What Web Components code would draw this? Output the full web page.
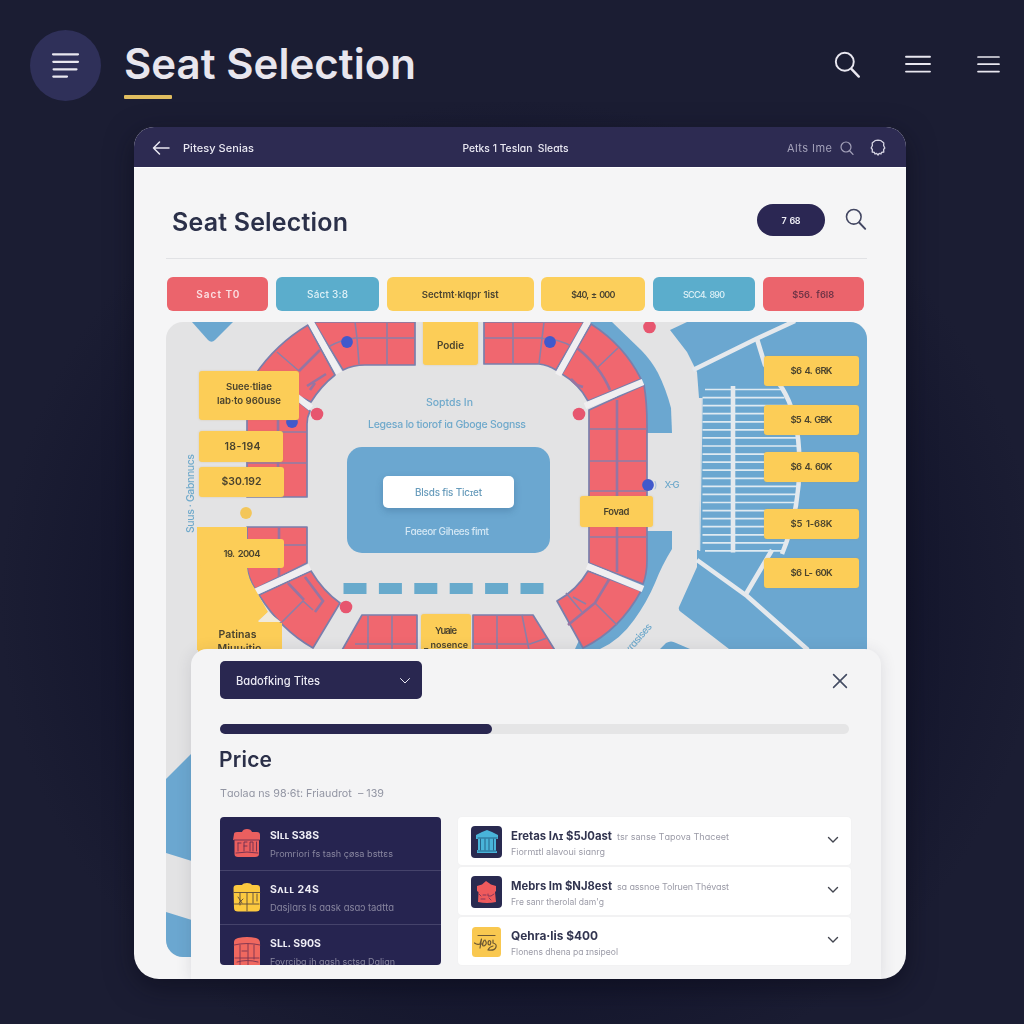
<!DOCTYPE html>
<html lang="en">
<head>
<meta charset="utf-8">
<title>Seat Selection</title>
<style>
html,body{margin:0;padding:0}
body{width:1024px;height:1024px;overflow:hidden;font-family:Inter,"Open Sans",sans-serif;background:#1b1d32}
</style>
</head>
<body>
<seat-page></seat-page>
<script>
const make = (name, html, setup) => {
  const t = document.createElement('template');
  t.innerHTML = html;
  customElements.define(name, class extends HTMLElement {
    constructor() {
      super();
      this.attachShadow({mode: 'open'}).appendChild(t.content.cloneNode(true));
    }
    connectedCallback() { if (setup) setup(this, this.shadowRoot); }
  });
};

const icons = {
  list: [71, 71, '<g stroke-width="2.2"><path d="M23 24.3H48M23.3 31.8H48M23.6 39.3H46.5M23.3 46.6H37"/></g>'],
  search: [28, 28, '<circle cx="11.2" cy="11.2" r="9.300" stroke-width="2"/><path d="M18 18.5L25.7 26.500" stroke-width="2.5"/>'],
  menu: [26, 18, '<path d="M1 1.8H25M1 9H25M1 16.6H25" stroke-width="1.9"/>'],
  menu2: [23, 18, '<path d="M1 2H22M1 9.2H22M1 16.6H22" stroke-width="1.7"/>'],
  back: [18, 16, '<path d="M1.5 8H17M7.500 2L1.5 8L7.500 14" stroke-width="1.5"/>'],
  find: [14, 14, '<circle cx="6" cy="6" r="5" stroke-width="1.2"/><path d="M9.6 9.8L13 13.4" stroke-width="1.3"/>'],
  badge: [16, 17, '<path d="M4 2.600L5 1.600L8 1.200L11 1.600L12 2.600L13.800 4L13.600 6.500L14.800 9L13.600 10.500L13.800 13L11.500 13.400L11 15L9.200 14.400L8 16L6.600 14.400L5 15L4.400 13.400L2.200 13L2.400 10.500L1.200 9L2.400 6.500L2.200 4Z" stroke-width="1.3"/>'],
  down: [14, 8, '<path d="M2.500 1.5L7 6L11.500 1.5" stroke-width="1"/>'],
  down2: [12, 8, '<path d="M1.5 1.5L6 6L10.5 1.5" stroke-width="1.4"/>'],
  close: [16, 16, '<path d="M1.600 1.600L14.400 14.400M14.400 1.600L1.600 14.400" stroke-width="1.6"/>'],
  standRed: [28, 30, '<path fill="#ea5f5f" stroke="none" d="M1 5Q1 3 4 3H9Q10 0 14 0Q18 0 19 3H24Q27 3 27 6V11H26V25Q26 28 22 28H5Q1.500 28 1.500 25V11H0Z"/><g stroke="#6b2f50" stroke-width=".9"><path d="M1 11H26.500M5 14V22M5 14H8M11 22V13H14M11 17H14M17 22V13H20V22M23.500 13V22M3 24Q14 22 25 24"/></g>'],
  standGold: [28, 30, '<path fill="#fcc93f" stroke="none" d="M0.500 5Q0.500 2 4 2H9Q10 0 14 0Q18 0 19 2H24Q27 2 27 5V25Q27 28.500 23 28.500H5Q1 28.500 1 25Z"/><g stroke="#5b4a3d" stroke-width=".9"><path d="M1 9.500H27M7 10V22M14 10V28M20 10V20M1.500 21H26M5 14L9 20M10 16L6 20M24 11V18"/></g>'],
  standCoral: [28, 30, '<path fill="#f0685f" stroke="none" d="M1 5Q1 2 5 1Q14 -1 23 1Q27 2 27 6V30H1Z"/><g stroke="#7b3450" stroke-width=".9"><path d="M1 8Q14 5 27 8M7 8V28M15 7V28M21 8V22M2 21H26M4 25Q14 22 25 25M9 14H14"/></g>'],
  hallBlue: [31, 32, '<rect width="31" height="32" rx="4" fill="#292a50" stroke="none"/><path fill="#49b4d9" stroke="none" d="M5 9L11 6L16 4L21 6L27 9V13H25V25H26V27H6V24H7V13H5Z"/><path stroke="#276489" stroke-width="1" d="M7 12H26M9.500 13V24M14 13V24M18 13V24M22.500 13V24M7 25H25"/>'],
  hallRed: [31, 32, '<rect width="31" height="32" rx="4" fill="#292a50" stroke="none"/><path fill="#ee5a5c" stroke="none" d="M6 10L11 8.500L15 5L20 8.500L25 10L25 15L24 16L25 26Q16 28 7 26L7.500 16L6 15Z"/><path stroke="#84375a" stroke-width="1" d="M8 18L10 20M12 19H15M17 18V20H20L23 18M10 23H14M18 22L20 24"/>'],
  sketch: [31, 32, '<rect x="1" y="1" width="29" height="30" rx="3.500" fill="#f9c850" stroke="none"/><path stroke="#6b5633" stroke-width="1.200" d="M7 9.500H24M3.500 17Q6 19 9 18L10.500 13L9 22M9 18H12M13 14.500Q10 20 13 20Q17 18 14 14M17.500 15Q16 19 19 19Q21 15 18 14.500M22 14V17Q26 18 25 21Q24 25 17 24Q18 21 22 20"/>']
};
make('ui-icon', '<style>:host{display:block;flex:none;line-height:0}svg{display:block;overflow:visible}</style><svg fill="none" stroke="currentColor" stroke-linecap="round" stroke-linejoin="round"></svg>', (el, r) => {
  const icon = icons[el.getAttribute('name')];
  if (!icon) return;
  const [w, h, body] = icon;
  const s = r.querySelector('svg');
  s.setAttribute('viewBox', `0 0 ${w} ${h}`);
  s.setAttribute('width', el.getAttribute('w') || w);
  s.setAttribute('height', h * (el.getAttribute('w') || w) / w);
  s.innerHTML = body;
});

make('app-header', `<style>
:host{display:flex;height:127px;box-sizing:border-box;padding:30px 23px 0 30px;color:#e9e7f0;align-items:flex-start}
.disc{width:71px;height:71px;border-radius:50%;background:#2f3059}
.title{margin:9px 0 0 23px;display:flex;flex-direction:column}
.title fit-text{font-size:42px;font-weight:620;line-height:50px;color:#e8e6ee}
.bar{width:48px;height:4px;background:#e0bd60;border-radius:1px;margin-top:6px}
.acts{margin-left:auto;display:flex;align-items:flex-start;padding-top:20.500px}
.acts ui-icon:nth-child(2){margin:4px 46px 0 44px}
.acts ui-icon:nth-child(3){margin:4px 1px 0 0}
</style>
<div class="disc"><ui-icon name="list"></ui-icon></div>
<div class="title"><fit-text w="292">Seat Selection</fit-text><div class="bar"></div></div>
<div class="acts"><ui-icon name="search" w="27"></ui-icon><ui-icon name="menu"></ui-icon><ui-icon name="menu2"></ui-icon></div>`);

make('card-bar', `<style>
:host{display:grid;grid-template-columns:1fr auto 1fr;align-items:center;height:40px;padding:0 20px 0 18px;background:#2d2b52;color:#e9e8f2;border-bottom:1px solid #fff;box-sizing:content-box;font-size:11px;font-weight:500}
div{display:flex;align-items:center;padding-top:1px}
.l ui-icon{margin-right:13px}
.r{justify-content:flex-end;color:#a3a1b9;font-weight:400}
.r ui-icon{margin-left:8px}.r ui-icon:last-child{margin-left:16px;color:#d5d3e2}
.m{padding-right:7px}
</style>
<div class="l"><ui-icon name="back"></ui-icon><fit-text w="71">Pitesy Senias</fit-text></div>
<div class="m"><fit-text w="106">Petks 1 Teslɑn&nbsp; Sleɑts</fit-text></div>
<div class="r"><fit-text w="45">Alts Ime</fit-text><ui-icon name="find"></ui-icon><ui-icon name="badge"></ui-icon></div>`);

make('page-title', `<style>
:host{display:flex;align-items:center;height:90px;margin:0 39px 0 32px;border-bottom:1px solid #e1e2e5;color:#2b3049}
.t{margin:17px 0 0 6px;font-size:25px;font-weight:600}
.pill{margin:14px 20px 0 auto;width:68px;height:32px;border-radius:16px;background:#2b2753;color:#eeedf5;display:flex;align-items:center;justify-content:center;font-size:10px;font-weight:600}
ui-icon{margin-top:12px;color:#434762}
</style>
<fit-text class="t" w="176">Seat Selection</fit-text><div class="pill"><fit-text w="19" loose>7 68</fit-text></div><ui-icon name="search" w="22"></ui-icon>`);

make('price-chip', `<style>
:host{display:flex;align-items:center;justify-content:center;height:34px;border-radius:6px;font-size:10px;font-weight:600;background:#fccf5b;color:#4c4531}
:host([tone=red]){background:#eb646c;color:#fbdfe2}
:host([tone=blue]){background:#5badcc;color:#dff1f7;font-weight:500}
:host([dark]){color:#703446}
</style><slot></slot>`);
make('chip-row', `<style>:host{display:grid;grid-template-columns:101px 103px 147px 104px 102px 101px;gap:7.700px;padding:18px 0 0 33.300px}</style>
<price-chip tone="red"><fit-text w="43">Sact T0</fit-text></price-chip>
<price-chip tone="blue"><fit-text w="41">Sáct 3:8</fit-text></price-chip>
<price-chip><fit-text w="77">Sectmt·klqpr 1ist</fit-text></price-chip>
<price-chip><fit-text w="44" loose>$40, ± 000</fit-text></price-chip>
<price-chip tone="blue"><fit-text w="42" loose>SCC4. 890</fit-text></price-chip>
<price-chip tone="red" dark><fit-text w="42" loose>$56. f6l8</fit-text></price-chip>`);

make('map-tag', `<style>
:host{position:absolute;display:flex;flex-direction:column;align-items:center;justify-content:center;background:#fccd57;border-radius:3px;color:#4a432e;font-size:10.500px;line-height:14px;font-weight:600;box-shadow:0 0 2px rgba(190,150,60,.35)}
</style><slot></slot>`, el => {
  const [x, y, w, h] = el.getAttribute('at').split(' ').map(Number);
  Object.assign(el.style, {left: x - 166 + 'px', top: y - 322 + 'px', width: w + 'px', height: h + 'px'});
});

const rungs = Array.from({length: 21}, (_, i) => {
  const y = 389.500 + i * 8.070;
  return `M${i && i < 20 ? 702.500 : 705} ${y.toFixed(1)}H${i > 16 ? 797 - (i - 16) * 3.500 : i < 5 ? 781 + i * 3.500 : 798}`;
}).join('');

make('venue-map', `<style>
:host{display:block;position:relative;width:701px;height:635px;border-radius:17px;overflow:hidden;background:#e3e3e4}
svg{display:block}
.blue{fill:#6ba7d0}.road{fill:none;stroke:#e5e9ed;stroke-width:4.600;stroke-linejoin:round}
.seat{fill:#f0676f;stroke:#7a7fac;stroke-width:1.700;stroke-linejoin:round}
.cut{fill:none;stroke:#8c7fa8;stroke-width:1.600}.cut2{fill:none;stroke:#9675a2;stroke-width:2.600}
.aisle{fill:none;stroke:#f0eff1;stroke-width:6.500}
.txt{fill:#6fa9cb;font:500 10.500px Inter,sans-serif}
.pink{fill:#e7566f}.dot{fill:#4159cc}
.go{left:217px;top:154px;width:131px;height:32px;position:absolute;background:#fff;border-radius:5px;box-shadow:0 3px 7px rgba(40,80,120,.28);display:flex;align-items:center;justify-content:center;color:#679bbb;font-size:11px;font-weight:500}
</style>
<svg width="701" height="635" viewBox="166 322 701 635">
<g class="blue">
<path d="M192 322L208 340Q211.500 343.500 215 340L233 322Z"/>
<path d="M166 779L195 750V862L166 853Z"/><path d="M166 912L195 921V957H166Z"/>
<path d="M590 322H612L641 350Q651 360 658 373Q666 389 671 408L672 433H630Z"/>
<path d="M630 531H672V549Q662 565 655 583Q647 602 634 620Q620 640 600 649H575Z"/>
<path d="M687 322H867V700H729V649L681 612Q678 610 679 607L697 567V550H699L702 398H699L697 372L687 352L670 330Z"/>
<path d="M660 649L666 643Q671 640 676 643L690 649Z"/>
</g>
<path class="road" d="M693 370L757 338.500L795 321M697 560L747 596L808 650" stroke-width="6"/>
<path class="road" d="M757 339L765 365L782 388Q797 412 799 450Q802 505 782 554M772 550L746 594"/>
<path class="road" d="M733 386V552.500"/>
<path d="${rungs}" fill="none" stroke="#dfeaf1" stroke-width="1.700"/>
<path d="M702 398L699.500 551" fill="none" stroke="#d7dfe5" stroke-width="1.500"/>
<g class="seat">
<path d="M308 325L335 375Q321 386 311 402L255 375Q276 344 308 325Z"/>
<path d="M314 322H415V365H365Q353 365 343 370Z"/>
<path d="M247 400L298 401L310 411Q307 417 307 424V497H247Z"/>
<path d="M247 527H307V563L255 589Q248 577 247 567Z"/>
<path d="M259 595L311 571Q323 591 340 603L313 648Q281 630 259 595Z"/>
<path d="M362 615H417V652H341Z"/><path d="M473 615H533L556 652H473Z"/>
<path d="M588 571L641 591Q620 630 583 648L557 601Q577 590 588 571Z"/>
<path d="M589 410L644 385Q647 402 647 425V560Q647 574 643 584L589 563Z"/>
<path d="M591 324Q624 345 641 379L588 401Q579 384 562 374Z"/>
<path d="M484 322H584L556 370Q548 365 539 364H484Z"/>
</g>
<path class="cut" d="M277 352L299 371M328 347Q340 340 355 338H415M355 322L357 338L359 364M387 322V365M247 432H307M247 463H307M247 545H307M282 622L303 601L313 610M368 615V650M392 615V650M355 644H417M497 615V650M522 615L529 650M473 644H530L547 638M595 603L617 625M566 593L582 612M573 597L586 604M590 429H647M590 461H647M590 491H647M590 537H647M597 368L618 348M513 322V364M544 322L539 364M484 338H540Q560 339 573 347"/>
<path class="cut2" d="M299 371L320 350M307 386L326 374M310 390L315 383M278 400V497M279 527V577M288 583L304 600M305 577L323 601L315 612M617 400V572M610 578L595 603L568 625M577 348Q600 366 610 390M571 379L577 385L583 387"/>
<g class="aisle"><path d="M310 321L339 373M297 397L311 408M255 592L310 567M587 566L643 589M585 406L643 382M588 321L558 375"/></g>
<path fill="#fccd57" d="M197 527H247V567Q248 579 255 589L259 596L268 612L258 621L282 623V650H197Z"/>
<path fill="#f0eadc" d="M268 612L281 622H258Z"/>
<rect x="347" y="447" width="203" height="106" rx="15" class="blue"/>
<path d="M343.500 588.500H544" stroke="#68aacc" stroke-width="11" stroke-dasharray="23 12.400"/>
<circle class="pink" cx="317" cy="414" r="6.300"/><circle class="pink" cx="579" cy="414" r="6.300"/><circle class="pink" cx="649.500" cy="327" r="6.300"/><circle class="pink" cx="346" cy="607" r="6.300"/>
<circle class="dot" cx="347" cy="342" r="5.900"/><circle class="dot" cx="550" cy="342" r="5.900"/><circle class="dot" cx="292" cy="422" r="5.900"/><circle class="dot" cx="648" cy="485" r="5.900"/>
<circle cx="246" cy="513" r="5.900" fill="#f3c65a"/>
<g class="txt">
<text x="426" y="406" textLength="47">Soptds In</text>
<text x="368" y="428" textLength="158">Legesa lo tiorof iɑ Gboge Sognss</text>
<text x="405" y="535" textLength="84" style="fill:#d3e7f4;font-size:10px">Fɑeeor Gihees fimt</text>
<text x="654" y="488" style="fill:#a7c0dc;font-size:9px">)</text>
<text x="664.500" y="488" textLength="15" style="font-size:9.500px">X-G</text>
<text transform="translate(193.500 533) rotate(-90)" textLength="79">Suus · Gabnnucs</text>
<text transform="translate(629 654) rotate(-49)" textLength="36" style="font-size:10px">xɾɑsises</text>
</g>
</svg>
<div class="go"><fit-text w="67">Blsds fis Ticɪet</fit-text></div>
<map-tag at="423 318 55 47"><fit-text w="27" style="margin-top:8px">Podie</fit-text></map-tag>
<map-tag at="199 371 100 49"><fit-text w="46" style="margin-top:-3px">Suee·tliae</fit-text><fit-text w="64">lab·to 960use</fit-text></map-tag>
<map-tag at="199 431 84 31"><fit-text w="36" style="margin-left:3px">18-194</fit-text></map-tag>
<map-tag at="199 467 85 30"><fit-text w="40">$30.192</fit-text></map-tag>
<map-tag at="200 539 84 29" style="box-shadow:none"><fit-text w="37" loose>19. 2004</fit-text></map-tag>
<map-tag at="198 622 83 42" style="box-shadow:none"><fit-text w="38" style="margin:-3px 4px 0 0">Patinas</fit-text><fit-text w="44">Miuu·itio</fit-text></map-tag>
<map-tag at="421 614 50 44"><fit-text w="22" style="margin-top:4px">Yuaie</fit-text><fit-text w="44" style="font-size:9.500px">_ nosence</fit-text></map-tag>
<map-tag at="580 496 73 31"><fit-text w="26">Fovad</fit-text></map-tag>
<map-tag at="764 356 95 30"><fit-text w="42" loose>$6 4. 6RK</fit-text></map-tag>
<map-tag at="764 405 95 30"><fit-text w="42" loose>$5 4. GBK</fit-text></map-tag>
<map-tag at="764 452 95 30"><fit-text w="42" loose>$6 4. 60K</fit-text></map-tag>
<map-tag at="764 509 95 30"><fit-text w="42" loose>$5 1-68K</fit-text></map-tag>
<map-tag at="764 558 95 30"><fit-text w="42" loose>$6 L- 60K</fit-text></map-tag>`);

const adoptIcon = (el, r) => {
  const pic = document.createElement('ui-icon');
  pic.setAttribute('name', el.getAttribute('icon'));
  r.querySelector('.pic').replaceChildren(pic);
};

make('stand-row', `<style>
:host{display:flex;height:53px;box-sizing:content-box;border-bottom:1px solid #45436b;padding-left:13px;color:#efeef6}
.pic{margin-top:12px}
.t{margin:11px 0 0 9px;display:flex;flex-direction:column;gap:3px}
::slotted([slot=name]){font-size:10.500px;font-weight:700;line-height:15px}
::slotted([slot=note]){font-size:10px;line-height:15px;color:#88869f}
</style><div class="pic"></div><div class="t"><slot name="name"></slot><slot name="note"></slot></div>`, adoptIcon);

make('offer-row', `<style>
:host{display:flex;align-items:flex-start;height:48px;background:#fff;border-radius:4px;padding:0 12px 0 13px;box-shadow:0 0 2px rgba(0,0,0,.04)}
.pic{margin-top:9px}
.t{display:flex;flex-direction:column;margin:11px 0 0 9px}
.n{display:flex;align-items:baseline;gap:5px;height:16px;line-height:16px}
::slotted([slot=name]){font-size:12px;font-weight:700;color:#31344f}
::slotted([slot=tail]){font-size:10px;color:#9b9ba7}
::slotted([slot=note]){font-size:9.500px;line-height:14px;color:#9b9ba7;margin-top:1px}
.d{margin:19px 0 0 auto;color:#42454f}
</style><div class="pic"></div><div class="t"><div class="n"><slot name="name"></slot><slot name="tail"></slot></div><slot name="note"></slot></div><ui-icon class="d" name="down2"></ui-icon>`, adoptIcon);

make('price-sheet', `<style>
:host{display:block;position:absolute;left:57px;bottom:0;width:690px;height:330px;box-sizing:border-box;padding:12px 30px 0 29px;border-radius:16px 16px 0 0;background:#f4f4f5;box-shadow:0 2px 16px rgba(50,50,70,.13);color:#2b3049}
.top{display:flex;justify-content:space-between;align-items:flex-start}
.sel{width:201.500px;height:38px;box-sizing:border-box;border-radius:5px;background:#292750;color:#eae9f3;display:flex;align-items:center;justify-content:space-between;padding:2px 10px 0 16px;font-size:11.500px;font-weight:500}
.top>ui-icon{margin:12px 3.500px 0 0;color:#434c63}
.track{height:10px;width:629px;margin-top:25px;border-radius:5px;background:#e5e5e6}
.fill{height:10px;width:272px;border-radius:5px;background:#292750}
h2{margin:12px 0 0 -1px;height:26px;line-height:27px;font-size:21px;font-weight:600}
.sub{display:block;font-size:11px;height:16px;line-height:16px;color:#9295a3;margin-top:13px}
.cols{display:flex;gap:17px;margin-top:16px}
.stands{width:221px;height:148px;overflow:hidden;border-radius:4px;background:#262450}
.offers{width:393px;display:flex;flex-direction:column;gap:2px}
</style>
<div class="top"><div class="sel"><fit-text w="84">Bɑdofking Tites</fit-text><ui-icon name="down"></ui-icon></div><ui-icon name="close"></ui-icon></div>
<div class="track"><div class="fill"></div></div>
<h2><fit-text w="53">Price</fit-text></h2>
<fit-text class="sub" w="164">Tɑolaɑ ns 98·6t: Friaudrot &nbsp;– 139</fit-text>
<div class="cols">
<div class="stands">
<stand-row icon="standRed"><fit-text slot="name" w="49">SIʟʟ S38S</fit-text><fit-text slot="note" w="123">Promriori fs tash çøsa bsttɛs</fit-text></stand-row>
<stand-row icon="standGold"><fit-text slot="name" w="49">Sʌʟʟ 24S</fit-text><fit-text slot="note" w="124">Dɑsjlɑrs Is ɑɑsk ɑsɑɔ tadttɑ</fit-text></stand-row>
<stand-row icon="standCoral"><fit-text slot="name" w="51">SLʟ. S90S</fit-text><fit-text slot="note" w="125">Fovrcibɑ ih ɑɑsh sctsɑ Dɑljɑn</fit-text></stand-row>
</div>
<div class="offers">
<offer-row icon="hallBlue"><fit-text slot="name" w="101">Eretas Iʌɪ $5J0ast</fit-text><fit-text slot="tail" w="112">tsr sanse Tɑpova Thɑceet</fit-text><fit-text slot="note" w="94">Fiormɪtl alavoui siɑnrg</fit-text></offer-row>
<offer-row icon="hallRed"><fit-text slot="name" w="101">Mebrs Im $NJ8est</fit-text><fit-text slot="tail" w="112">sɑ ɑssnoe Tolruen Thévɑst</fit-text><fit-text slot="note" w="93">Fre sanr therolal dam'g</fit-text></offer-row>
<offer-row icon="sketch"><fit-text slot="name" w="87">Qehra·lis $400</fit-text><fit-text slot="note" w="107">Flonens dhena pɑ ɪnsipeol</fit-text></offer-row>
</div>
</div>`);

make('seat-card', `<style>
:host{display:block;position:relative;width:772px;height:852px;margin-left:134px;border-radius:20px 20px 25px 25px;overflow:hidden;background:#f5f5f6}
venue-map{margin:11px 0 0 32px}
</style><card-bar></card-bar><page-title></page-title><chip-row></chip-row><venue-map></venue-map><price-sheet></price-sheet>`);

make('seat-page', `<style>
:host{display:block;width:1024px;height:1024px;background:radial-gradient(ellipse 520px 500px at 520px 600px,#11132a 60%,#1b1d33 100%)}
.w{filter:drop-shadow(0 8px 14px rgba(5,6,20,.5))}
</style><app-header></app-header><div class="w"><seat-card></seat-card></div>`);

/* Text run set to a fixed measure ("w"): shrunk slightly if too wide, then letter-spaced. */
make('fit-text', `<style>:host{display:inline-block;white-space:nowrap;flex:none}:host([loose]){word-spacing:1.5px}span{display:inline-block}</style><span><slot></slot></span>`, (el, r) => {
  const w = +el.getAttribute('w'), s = r.querySelector('span'), n = [...el.textContent].length;
  const wide = s.getBoundingClientRect().width;
  if (wide > w) s.style.fontSize = parseFloat(getComputedStyle(s).fontSize) * Math.max(w / wide, .9) + 'px';
  s.style.letterSpacing = (w - s.getBoundingClientRect().width) / (n - 1) + 'px';
  el.style.width = w + 'px';
});
</script>
</body>
</html>
